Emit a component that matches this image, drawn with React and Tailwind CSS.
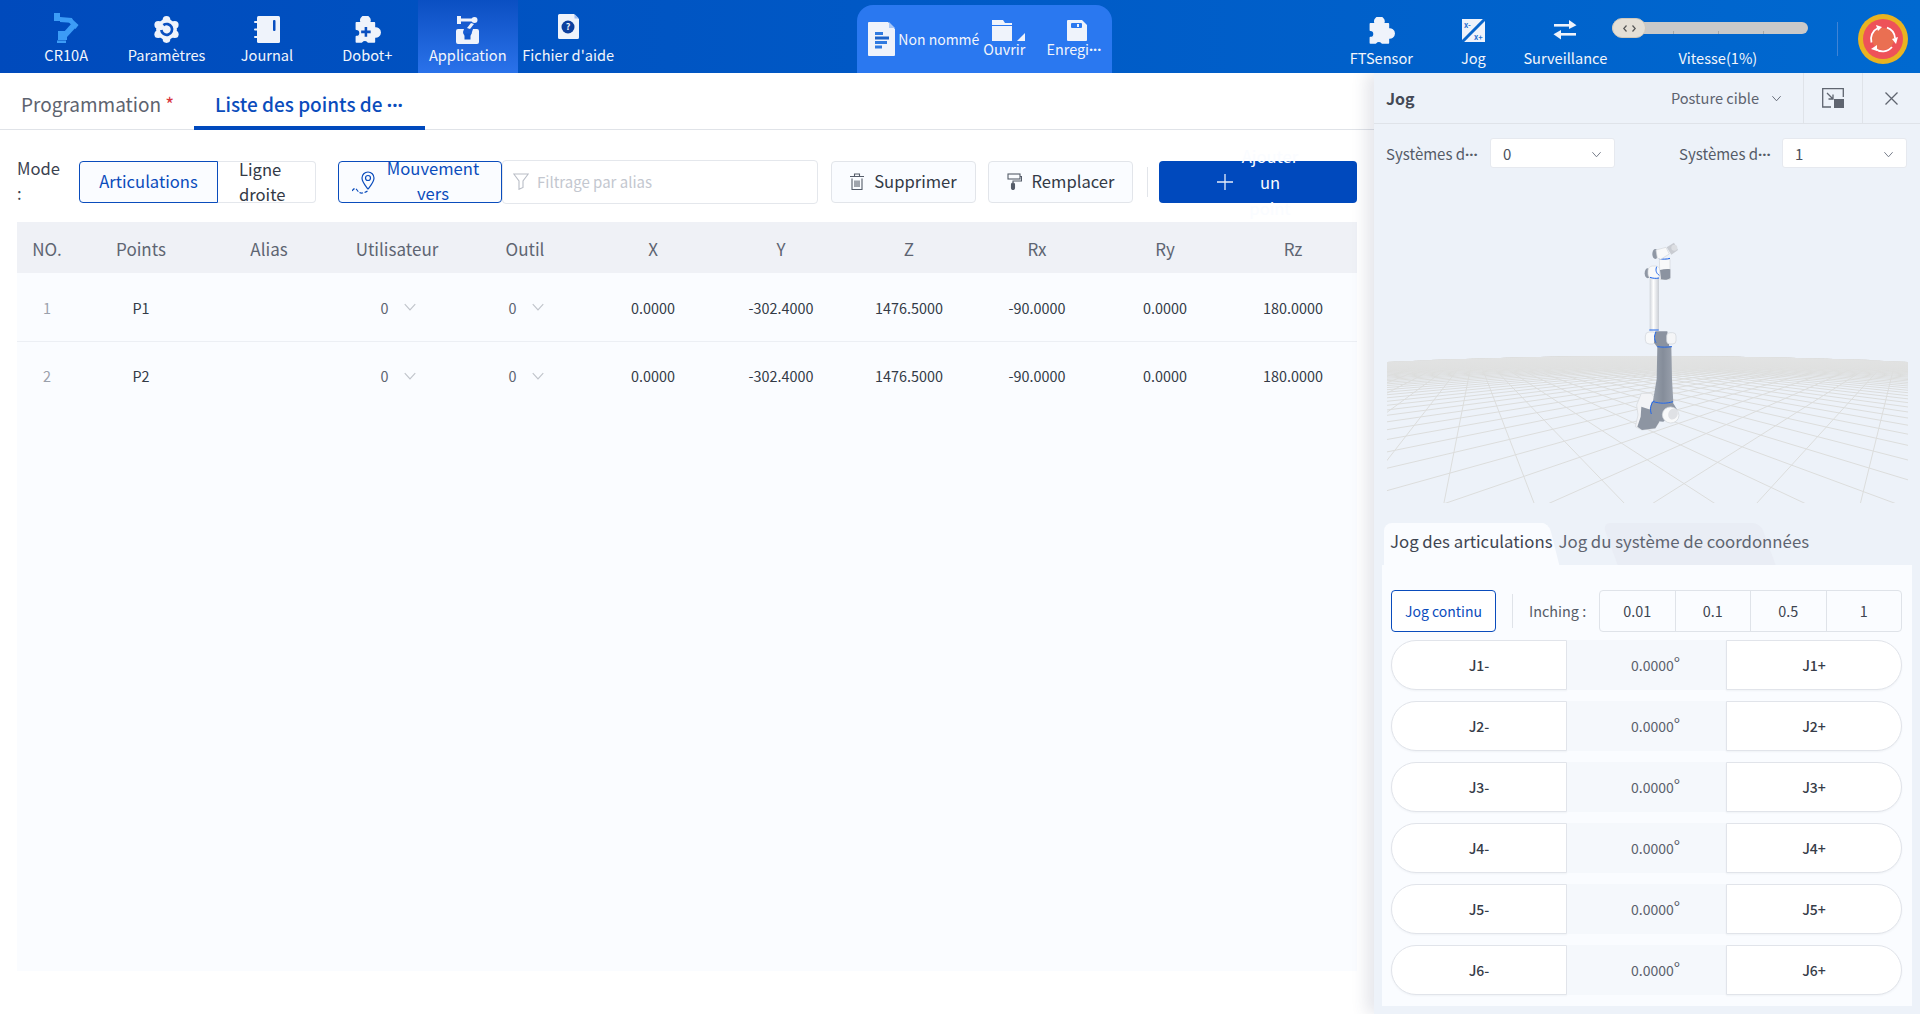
const ICON = '#eff3fb';

const COLUMNS = ['NO.', 'Points', 'Alias', 'Utilisateur', 'Outil', 'X', 'Y', 'Z', 'Rx', 'Ry', 'Rz'];
const ROWS = [
  { no: 1, name: 'P1' },
  { no: 2, name: 'P2' },
];
const JOINTS = ['J1', 'J2', 'J3', 'J4', 'J5', 'J6'];

// the truncation dots sit on the middle line in the reference
function Dots() {
  return <span className="font-['Noto_Sans',sans-serif] font-bold">···</span>;
}

function Chevron({ className }) {
  return (
    <svg viewBox="0 0 12 12" className={className} fill="none" stroke="currentColor" strokeWidth="1">
      <path d="M1.5 3.5 6 8.5l4.5-5" />
    </svg>
  );
}

function ArmIcon() {
  return (
    <svg width="25" height="30" viewBox="0 0 25 30" fill="#3c9cf6">
      <rect x="0" y="0" width="6" height="8" />
      <path d="M6 4l12 1 2 5-14-1z" />
      <path d="M17 5l7.500 7-3 4-7-7z" />
      <path d="M24 12l-11 12-4-4 9-10z" />
      <rect x="4" y="18" width="9" height="9" />
      <rect x="3" y="27.500" width="9" height="2.500" />
    </svg>
  );
}

function GearIcon() {
  const lobes = [0, 60, 120, 180, 240, 300];
  return (
    <svg width="27" height="27" viewBox="0 0 26 26">
      <circle cx="13" cy="13" r="10" fill={ICON} />
      {lobes.map((a) => (
        <circle
          key={a}
          cx={13 + 9.2 * Math.cos(((a + 30) * Math.PI) / 180)}
          cy={13 + 9.2 * Math.sin(((a + 30) * Math.PI) / 180)}
          r="3.7"
          fill={ICON}
        />
      ))}
      <path d="M10 8.800A5.200 5.200 0 1 1 8 13.500" fill="none" stroke="#0a4fc0" strokeWidth="2.600" />
    </svg>
  );
}

function NotebookIcon() {
  return (
    <svg width="26" height="27" viewBox="0 0 26 27" fill={ICON}>
      <rect x="3" y="0" width="23" height="27" rx="1.500" />
      <rect x="0" y="5" width="5" height="2" rx="1" />
      <rect x="0" y="12.500" width="5" height="2" rx="1" />
      <rect x="0" y="20" width="5" height="2" rx="1" />
      <rect x="19" y="4" width="2.500" height="11" rx="1" fill="#0a4fc0" />
    </svg>
  );
}

function PuzzleIcon({ plus }) {
  return (
    <svg width="27" height="27" viewBox="3 0.500 25 25.500">
      <path
        d="M5 7H10A4.200 4.200 0 1 1 17 7H22V12A4.200 4.200 0 1 1 22 20V25H16A3.500 3.500 0 0 0 10 25H5V20A3.500 3.500 0 0 0 5 13Z"
        fill={ICON}
        stroke={ICON}
        strokeWidth="1.500"
        strokeLinejoin="round"
      />
      {plus && <path d="M14 11v9M9.500 15.500h9" stroke="#0a4fc0" strokeWidth="2.400" />}
    </svg>
  );
}

function AppIcon() {
  return (
    <svg width="25" height="28" viewBox="0 0 25 28" fill={ICON}>
      <rect x="2" y="0" width="4" height="8" />
      <rect x="6" y="2.500" width="11" height="3" />
      <circle cx="19.500" cy="4" r="3" />
      <path d="M16 7l3 1-4 5-3-1z" />
      <path d="M1 15a2 2 0 0 1 2-2h6l-1 3H8a4 4 0 0 0 9 0l1-3h4a2 2 0 0 1 2 2v11a2 2 0 0 1-2 2H3a2 2 0 0 1-2-2z" />
      <rect x="9.500" y="17.500" width="6" height="6" fill="#1258cc" />
    </svg>
  );
}

function HelpIcon() {
  return (
    <svg width="21" height="25" viewBox="0 0 21 25">
      <path d="M1.500 0H16l5 5v18.500a1.500 1.500 0 0 1-1.500 1.500h-18A1.500 1.500 0 0 1 0 23.500V1.500A1.500 1.500 0 0 1 1.500 0z" fill={ICON} />
      <path d="M16.500 0 21 4.500h-4.500z" fill="#9fbdf0" />
      <circle cx="10" cy="13" r="6.500" fill="#0d3f9e" />
      <text x="10" y="16" textAnchor="middle" fontSize="9" fontWeight="700" fill={ICON}>?</text>
    </svg>
  );
}

function DocIcon() {
  return (
    <svg width="27" height="34" viewBox="0 0 27 34">
      <path d="M1 0H20l7 7v26a1 1 0 0 1-1 1H1a1 1 0 0 1-1-1V1a1 1 0 0 1 1-1z" fill={ICON} />
      <path d="M21 0l6 6h-6z" fill="#a9c8f8" />
      <rect x="7" y="10" width="8" height="3" fill="#2f7ae0" />
      <rect x="7" y="14.500" width="14" height="3" fill="#1d63c8" />
      <rect x="7" y="19" width="12" height="3" fill="#2f7ae0" />
      <rect x="7" y="23.500" width="7" height="3" fill="#2f7ae0" />
    </svg>
  );
}

function FolderIcon() {
  return (
    <svg width="33" height="21" viewBox="0 0 33 21" fill={ICON}>
      <path d="M0 0h11l2 3h7v2H0z" />
      <rect x="0" y="6" width="20" height="15" />
      <path d="M33 13v8h-8z" />
    </svg>
  );
}

function SaveIcon() {
  return (
    <svg width="20" height="21" viewBox="0 0 20 21">
      <path d="M1 0H15l5 5v15a1 1 0 0 1-1 1H1a1 1 0 0 1-1-1V1a1 1 0 0 1 1-1z" fill={ICON} />
      <rect x="4" y="3" width="11" height="5" rx="1" fill="#2a78f0" />
      <rect x="10" y="4" width="2" height="3" fill={ICON} />
    </svg>
  );
}

function JogIcon() {
  return (
    <svg width="23" height="23" viewBox="0 0 23 23">
      <rect width="23" height="23" fill={ICON} />
      <path d="M23 0 0 23" stroke="#0866cc" strokeWidth="3" />
      <text x="2" y="9" fontSize="7.500" fontWeight="700" fill="#1f6fd0">x-</text>
      <text x="12" y="20.500" fontSize="7.500" fontWeight="700" fill="#1f6fd0">x+</text>
    </svg>
  );
}

function SwapIcon() {
  return (
    <svg width="24" height="20" viewBox="0 0 24 20" fill={ICON}>
      <rect x="1" y="4" width="17" height="2.600" />
      <path d="M16 0l7.500 5.300L16 9z" />
      <rect x="6" y="13" width="17" height="2.600" />
      <path d="M8 10 .5 14.300 8 19.500z" />
    </svg>
  );
}

function EstopIcon() {
  return (
    <svg width="50" height="50" viewBox="0 0 50 50">
      <circle cx="25" cy="25" r="25" fill="#e9b321" />
      <circle cx="25" cy="25" r="20" fill="#ee5259" />
      <circle cx="25" cy="25" r="11" fill="#ea6f52" />
      <g fill="none" stroke="#fff" strokeWidth="1.800">
        <path d="M13.500 28.500A12 12 0 0 1 20 14" />
        <path d="M29 13.700A12 12 0 0 1 37 24" />
        <path d="M34 33A12 12 0 0 1 17 34.500" />
      </g>
      <g fill="#fff">
        <path d="M18 11l6 2-4 4z" />
        <path d="M34 25l6-2-2 7z" />
        <path d="M19 31l0 6-6-2z" />
      </g>
    </svg>
  );
}

function NavItem({ icon, label, active, top }) {
  return (
    <div
      className={`w-[100.4px] flex flex-col items-center relative ${
        active ? 'bg-gradient-to-b from-[#0a4fc2] to-[#2a72ea]' : ''
      }`}
    >
      <div className={`h-[30px] flex items-center justify-center ${top}`}>{icon}</div>
      <span className="absolute top-[45px] text-[14.6px] leading-5 whitespace-nowrap text-[#f2f5fb]">{label}</span>
    </div>
  );
}

function RightItem({ icon, label }) {
  return (
    <div className="w-[92px] flex flex-col items-center pt-[15px]">
      <div className="h-[30px] flex items-center justify-center">{icon}</div>
      <span className="mt-[3px] text-[14.6px] leading-5 whitespace-nowrap text-[#f2f5fb]">{label}</span>
    </div>
  );
}

function TopBar() {
  return (
    <header className="relative z-20 h-[73px] flex bg-gradient-to-r from-[#004abc] to-[#0069d0]">
      <nav className="flex pl-4">
        <NavItem icon={<ArmIcon />} label="CR10A" top="mt-[13px]" />
        <NavItem icon={<GearIcon />} label="Paramètres" top="mt-[14px]" />
        <NavItem icon={<NotebookIcon />} label="Journal" top="mt-[14px]" />
        <NavItem icon={<PuzzleIcon plus />} label="Dobot+" top="mt-[14px]" />
        <NavItem icon={<AppIcon />} label="Application" active top="mt-[15px]" />
        <NavItem icon={<HelpIcon />} label="Fichier d'aide" top="mt-[11px]" />
      </nav>
      <div className="ml-[239px] mt-[5px] w-[255px] rounded-t-2xl bg-[#2a78f0] flex text-[14.4px] text-[#f2f5fb]">
        <div className="flex items-center pl-[11px] h-[68px] w-[123px] shrink-0">
          <DocIcon />
          <span className="ml-[3px] text-[14px] whitespace-nowrap">Non nommé</span>
        </div>
        <div className="w-[50px] -ml-[1px] shrink-0 flex flex-col items-center pt-[15px]">
          <div className="pl-[8px]"><FolderIcon /></div>
          <span className="leading-5 -mt-[2px]">Ouvrir</span>
        </div>
        <div className="flex-1 flex flex-col items-center pt-[15px] pl-[6px]">
          <div className="pl-[6px]"><SaveIcon /></div>
          <span className="leading-5 -mt-[2px] whitespace-nowrap">Enregi<Dots /></span>
        </div>
      </div>
      <div className="ml-[223px] flex">
        <RightItem icon={<PuzzleIcon />} label="FTSensor" />
        <RightItem icon={<JogIcon />} label="Jog" />
        <RightItem icon={<SwapIcon />} label="Surveillance" />
      </div>
      <div className="ml-px w-[196px] pt-[18px]">
        <div className="relative h-[20px]">
          <div className="absolute inset-x-0 top-[4px] h-3 rounded-full bg-[#c9c9c9]" />
          <i className="absolute left-[61px] top-[13px] h-[3px] w-px bg-[#a8a8a8]" />
          <i className="absolute left-[106px] top-[13px] h-[3px] w-px bg-[#a8a8a8]" />
          <i className="absolute left-[151px] top-[13px] h-[3px] w-px bg-[#a8a8a8]" />
          <div className="absolute left-0 top-0 h-[20px] w-[34px] rounded-full bg-[#e4dfd6] border border-[#cfc8bb] flex items-center justify-center gap-[5px]">
            <svg width="4" height="7" viewBox="0 0 4 7" fill="none" stroke="#555" strokeWidth="1.200"><path d="M3.500.500.800 3.500l2.700 3" /></svg>
            <svg width="4" height="7" viewBox="0 0 4 7" fill="none" stroke="#555" strokeWidth="1.200"><path d="M.500.500l2.700 3-2.700 3" /></svg>
          </div>
        </div>
        <div className="mt-[10px] pl-[15px] text-center text-[14.6px] leading-5 text-[#f2f5fb]">Vitesse(1%)</div>
      </div>
      <div className="ml-[29px] mt-[22px] h-[34px] w-px bg-[#3f84d6]" />
      <div className="ml-5 mt-[14px]">
        <EstopIcon />
      </div>
    </header>
  );
}

function Toolbar() {
  return (
    <div className="h-[92px] pl-[17px] pt-[31px] flex items-start text-[16.6px] leading-[25px]">
      <div className="w-[47px] text-[#3b4250] -mt-[5px]">Mode :</div>
      <div className="ml-[15px] w-[139px] h-[42px] pb-px rounded-l border border-[#0a4cbc] bg-[#fafcff] text-[#0a4cbc] flex items-center justify-center">
        Articulations
      </div>
      <div className="w-[98px] h-[42px] rounded-r border border-l-0 border-[#e4e7ec] pl-[21px] text-[#333a46]">
        <div className="-mt-[5px]">Ligne droite</div>
      </div>
      <button className="ml-[22px] w-[164px] h-[42px] rounded border border-[#0a4cbc] bg-[#fafcff] text-[#0a4cbc] flex items-center pl-[13px]">
        <svg width="23" height="24" viewBox="0 0 23 24" fill="none" stroke="#0a4cbc" strokeWidth="1.200" className="shrink-0">
          <path d="M16 19c-3-4-6-7-6-11a6 6 0 0 1 12 0c0 4-3 7-6 11z" />
          <circle cx="16" cy="8" r="2.500" />
          <path d="M0 21c2-3 3.500-3 5-1s3 3.500 5.500 3 3.500-1 5-2" strokeDasharray="3.500 1.500" />
        </svg>
        <span className="w-[116px] text-center -mt-[2px]">Mouvement vers</span>
      </button>
      <div className="-mt-px w-[316px] h-[44px] pb-px rounded border border-[#e4e7ec] bg-white flex items-center pl-[10px] text-[15px] text-[#c3c7cf]">
        <svg width="16" height="17" viewBox="0 0 16 17" fill="none" stroke="#b9bdc6" strokeWidth="1.100">
          <path d="M.800 1h14.400L10 8v6.500l-4 1.800V8z" />
        </svg>
        <span className="ml-[8px]">Filtrage par alias</span>
      </div>
      <button className="ml-[13px] w-[145px] h-[42px] pb-px rounded border border-[#e2e5ea] bg-[#fafcff] text-[#333a46] flex items-center justify-center gap-[10px]">
        <svg width="14" height="17" viewBox="0 0 14 17" fill="none" stroke="#555c69" strokeWidth="1.100">
          <path d="M0 3.500h14M4.500 3.500V1h5v2.500M2 5.500v11h10v-11M5 7.500v6.500M7 7.500v6.500M9 7.500v6.500" />
        </svg>
        Supprimer
      </button>
      <button className="ml-[12px] w-[145px] h-[42px] pb-px rounded border border-[#e2e5ea] bg-[#fafcff] text-[#333a46] flex items-center justify-center gap-[10px]">
        <svg width="15" height="17" viewBox="0 0 15 17" fill="none" stroke="#555c69" strokeWidth="1.100">
          <rect x="1" y="1" width="12" height="5" />
          <path d="M13 3.500h1.500v4.500H6v2" />
          <rect x="4.500" y="10" width="3" height="6.500" rx="1.500" fill="#555c69" />
        </svg>
        Remplacer
      </button>
      <div className="ml-[14px] mt-[6px] w-px h-[30px] bg-[#e2e5ea]" />
      <button className="ml-[11px] w-[198px] h-[42px] rounded bg-[#0049bd] text-[#fafcff] flex items-center pl-[58px] leading-[26px]">
        <svg width="16" height="16" viewBox="0 0 16 16" stroke="#e6edfa" strokeWidth="1.300" className="shrink-0">
          <path d="M8 0v16M0 8h16" />
        </svg>
        <span className="ml-[4px] w-[66px] text-center">
          Ajouter
          <br />
          un
          <br />
          point
        </span>
      </button>
    </div>
  );
}

function PointsTable() {
  const values = ['0.0000', '-302.4000', '1476.5000', '-90.0000', '0.0000', '180.0000'];
  return (
    <div className="ml-[17px] mr-[17px] h-[749px] bg-[#fafcff]">
      <div className="grid grid-cols-[60px_repeat(10,1fr)] h-[51px] pt-[2px] items-center bg-[#eff1f6] text-[17px] text-[#5e6572] text-center">
        {COLUMNS.map((c) => (
          <div key={c}>{c}</div>
        ))}
      </div>
      {ROWS.map((r, i) => (
        <div
          key={r.no}
          className={`grid grid-cols-[60px_repeat(10,1fr)] items-center text-center text-[14.4px] text-[#333a46] ${
            i === 0 ? 'h-[69px] pt-px border-b border-[#eceff4]' : 'h-[68px]'
          }`}
        >
          <div className="text-[#9aa0ab]">{r.no}</div>
          <div>{r.name}</div>
          <div />
          {[0, 1].map((k) => (
            <div key={k} className="flex items-center justify-center gap-[14px] pl-[3px] text-[#5c6470]">
              0
              <Chevron className="w-[14px] h-[14px] text-[#c0c4cb]" />
            </div>
          ))}
          {values.map((v, n) => (
            <div key={n}>{v}</div>
          ))}
        </div>
      ))}
    </div>
  );
}

function Floor() {
  const cx = 270;
  const y0 = -8;
  const f = 210;
  const fh = 479;
  const rot = (41 * Math.PI) / 180;
  const project = (x, z) => [cx + (f * x) / z, y0 + fh / z];
  const world = (a, b) => [a * Math.cos(rot) - b * Math.sin(rot), 25 + a * Math.sin(rot) + b * Math.cos(rot)];
  const lines = [];
  const segment = (p, q) => {
    let [x1, z1] = p;
    let [x2, z2] = q;
    if (z1 < 1 && z2 < 1) return;
    if (z1 < 1) {
      const t = (1 - z1) / (z2 - z1);
      x1 += (x2 - x1) * t;
      z1 = 1;
    }
    if (z2 < 1) {
      const t = (1 - z2) / (z1 - z2);
      x2 += (x1 - x2) * t;
      z2 = 1;
    }
    const [a, b] = project(x1, z1);
    const [c, d] = project(x2, z2);
    lines.push(`M${a.toFixed(1)} ${b.toFixed(1)}L${c.toFixed(1)} ${d.toFixed(1)}`);
  };
  for (let i = -60; i <= 60; i += 1) {
    segment(world(i + 0.26, -70), world(i + 0.26, 70));
    segment(world(-70, i + 0.5), world(70, i + 0.5));
  }
  return (
    <svg width="521" height="147" viewBox="0 0 521 147" className="block">
      <defs>
        <clipPath id="floor-clip">
          <path d="M0 6Q260 -6 521 6V147H0Z" />
        </clipPath>
        <linearGradient id="floor-haze" x1="0" y1="0" x2="0" y2="1">
          <stop offset="0" stopColor="#e2e3e3" />
          <stop offset="0.5" stopColor="#e2e3e3" stopOpacity="0.7" />
          <stop offset="1" stopColor="#e2e3e3" stopOpacity="0" />
        </linearGradient>
      </defs>
      <g clipPath="url(#floor-clip)">
        <path d={lines.join('')} fill="none" stroke="#dcdddc" strokeWidth="1" />
        <rect width="521" height="20" fill="url(#floor-haze)" />
      </g>
    </svg>
  );
}

function Robot() {
  return (
    <svg width="110" height="230" viewBox="0 0 330 690">
      <defs>
        <linearGradient id="robot-white" x1="0" y1="0" x2="1" y2="0">
          <stop offset="0" stopColor="#cfd3d9" />
          <stop offset="0.4" stopColor="#ffffff" />
          <stop offset="1" stopColor="#c9cdd4" />
        </linearGradient>
        <linearGradient id="robot-grey" x1="0" y1="0" x2="1" y2="0">
          <stop offset="0" stopColor="#98a0ac" />
          <stop offset="0.5" stopColor="#858d9a" />
          <stop offset="1" stopColor="#9aa1ad" />
        </linearGradient>
      </defs>
      {/* base */}
      <path d="M124 520l30 0 14 20-6 40 16 25-12 20-40 5-20-10 8-35-4-30z" fill="#f2f3f6" stroke="#d3d6db" strokeWidth="2" />
      <path d="M124 560l30 10 24 35-12 20-40 5-14-10 10-30z" fill="#8d95a2" />
      {/* lower arm */}
      <path d="M172 378h42l2 100 4 70h-62l12-70z" fill="url(#robot-grey)" />
      <path d="M155 545h62l15 25-42 35-32-3-10-30z" fill="#8f97a4" />
      <ellipse cx="212" cy="585" rx="25" ry="24" fill="#f8f9fa" stroke="#d3d6db" strokeWidth="2" transform="rotate(25 212 585)" />
      <ellipse cx="219" cy="582" rx="14" ry="17" fill="#dfe1e5" transform="rotate(25 219 582)" />
      <path d="M160 545c20 6 40 6 59 0M162 542c-10 10-13 25-8 40" fill="none" stroke="#1f66ec" strokeWidth="3" />
      {/* upper arm */}
      <rect x="149" y="170" width="28" height="162" fill="url(#robot-white)" />
      {/* elbow */}
      <rect x="136" y="336" width="34" height="36" rx="12" fill="#f8f9fa" stroke="#cfd3d9" strokeWidth="2" />
      <path d="M166 334h36l6 48h-36l-10-14z" fill="#8a92a0" />
      <rect x="200" y="338" width="28" height="34" rx="10" fill="#f4f5f7" stroke="#cfd3d9" strokeWidth="2" />
      <path d="M148 330h28M172 380c14 2 30 2 44 0M168 336c-6 10-6 22 0 32" fill="none" stroke="#1f66ec" strokeWidth="3" />
      {/* wrist */}
      <ellipse cx="143" cy="160" rx="9" ry="15" fill="#8f97a4" />
      <rect x="144" y="138" width="36" height="38" rx="14" fill="#f8f9fa" stroke="#d3d6db" strokeWidth="2" />
      <path d="M178 118h32v60h-30z" fill="#f8f9fa" stroke="#d3d6db" strokeWidth="2" />
      <path d="M180 150c10-2 20-4 31-2v26c-6 6-18 6-28 4z" fill="#8b93a0" />
      <path d="M150 172c8 3 18 4 27 2M178 116c10 2 22 2 32-1M170 140c-4 10-2 20 8 26" fill="none" stroke="#1f66ec" strokeWidth="3" />
      {/* flange */}
      <ellipse cx="166" cy="102" rx="9" ry="15" fill="#8f97a4" />
      <path d="M168 90l30-8 10 20-26 16-10-4z" fill="#f8f9fa" stroke="#d3d6db" strokeWidth="2" />
      <path d="M200 82l22-14 12 22-20 14z" fill="#c9ccd2" />
      <circle cx="223" cy="83" r="9" fill="#dcdee2" />
    </svg>
  );
}

function JogRow({ joint }) {
  return (
    <div className="flex h-[50px] text-[14px]">
      <button className="w-[176px] rounded-l-full border border-[#e1e4ea] bg-white font-medium text-[#363c48] shadow-[0_1px_2px_rgba(40,50,70,0.05)]">
        {joint}-
      </button>
      <div className="w-[159px] pl-[18px] bg-[#f5f8fc] flex items-center justify-center text-[#5b616d]">
        0.0000
        <span className="text-[17px] leading-none -mt-[5px]">°</span>
      </div>
      <button className="w-[176px] rounded-r-full border border-[#e1e4ea] bg-white font-medium text-[#363c48] shadow-[0_1px_2px_rgba(40,50,70,0.05)]">
        {joint}+
      </button>
    </div>
  );
}

function SelectBox({ value }) {
  return (
    <div className="w-[125px] h-[30px] pt-[2px] rounded-[3px] bg-white border border-[#e6e9ef] flex items-center justify-between pl-[12px] pr-[12px] text-[15px] text-[#4a505c]">
      {value}
      <Chevron className="w-[11px] h-[11px] text-[#6b7280]" />
    </div>
  );
}

function JogPanel() {
  return (
    <aside className="relative z-10 flex-1 bg-[#edf2f9] shadow-[-8px_0_14px_rgba(60,70,110,0.13)] flex flex-col">
      <div className="h-[51px] flex items-stretch border-b border-[#dfe3e9] shrink-0">
        <div className="pl-3 flex items-center text-[16px] font-bold text-[#444a56]">Jog</div>
        <div className="ml-auto flex items-center text-[14.6px] text-[#5d636f] pr-[21px]">
          Posture cible
          <Chevron className="ml-[12px] w-[11px] h-[11px]" />
        </div>
        <div className="w-[59px] border-l border-[#dfe3e9] flex items-center justify-center">
          <svg width="22" height="20" viewBox="0 0 22 20" fill="none" stroke="#5f6570" strokeWidth="1.300">
            <path d="M9 19H.700V.700h20.600V9" />
            <path d="M5 5l6 6M11 6.500V11H6.500" />
            <rect x="12" y="11" width="10" height="9" fill="#5f6570" stroke="none" />
          </svg>
        </div>
        <div className="w-[58px] border-l border-[#dfe3e9] flex items-center justify-center">
          <svg width="13" height="13" viewBox="0 0 13 13" stroke="#5f6570" strokeWidth="1.300">
            <path d="M.500.500l12 12M12.500.500l-12 12" />
          </svg>
        </div>
      </div>

      <div className="flex items-center pl-3 mt-[14px] text-[15px] text-[#555b67] shrink-0">
        <span className="w-[104px] pt-[2px] whitespace-nowrap">Systèmes d<Dots /></span>
        <SelectBox value="0" />
        <span className="ml-[64px] w-[103px] pt-[2px] whitespace-nowrap">Systèmes d<Dots /></span>
        <SelectBox value="1" />
      </div>

      <div className="relative h-[355px] shrink-0 pl-[13px] pt-[188px]">
        <Floor />
        <div className="absolute left-[226px] top-[52px]">
          <Robot />
        </div>
      </div>

      <div className="relative h-[42px] ml-2 shrink-0">
        <div className="absolute left-[228px] top-0 w-[158px] h-[42px] bg-[#e9edf5] rounded-t-lg skew-x-[20deg]" />
        <div className="absolute left-[2px] top-0 w-[165px] h-[42px] bg-[#fafcff] rounded-tl-lg rounded-tr-lg" />
        <div className="absolute left-[158px] top-0 w-[14px] h-[42px] bg-[#fafcff] rounded-tr-lg skew-x-[14deg]" />
        <div className="relative h-full flex items-center pb-[4px] text-[16.8px]">
          <span className="ml-[8px] text-[#3f4551]">Jog des articulations</span>
          <span className="ml-[6px] text-[#5f6571]">Jog du système de coordonnées</span>
        </div>
      </div>

      <div className="ml-2 w-[530px] h-[441px] bg-[#fafcff] pl-[9px] pt-[25px] shrink-0">
        <div className="flex h-[42px] items-center text-[14.4px]">
          <button className="w-[105px] h-[42px] rounded border border-[#0a4cbc] text-[14px] text-[#0a4cbc] bg-white">Jog continu</button>
          <div className="ml-[16px] h-[34px] w-px bg-[#dfe3e9]" />
          <span className="ml-[16px] w-[70px] text-[#555b67] whitespace-nowrap">Inching :</span>
          <div className="flex w-[303px] h-[42px] rounded border border-[#dfe3e9] text-[#3d4450] divide-x divide-[#dfe3e9]">
            {['0.01', '0.1', '0.5', '1'].map((v) => (
              <div key={v} className="flex-1 flex items-center justify-center">{v}</div>
            ))}
          </div>
        </div>
        <div className="mt-2 flex flex-col gap-[11px]">
          {JOINTS.map((j) => (
            <JogRow key={j} joint={j} />
          ))}
        </div>
      </div>
    </aside>
  );
}

export default function App() {
  return (
    <div className="w-[1920px] h-[1014px] overflow-hidden flex flex-col bg-white font-['Noto_Sans_CJK_SC','Noto_Sans',sans-serif]">
      <TopBar />
      <div className="flex flex-1 min-h-0">
        <main className="w-[1374px] shrink-0">
          <div className="h-[57px] border-b border-[#e0e3e8] flex text-[19px]">
            <div className="w-[194px] pl-[21px] pt-[17px] text-[#5d636f] whitespace-nowrap">
              Programmation <span className="text-[#d9363e]">*</span>
            </div>
            <div className="w-[231px] h-[57px] border-b-4 border-[#0049bd] pl-[21px] pt-[17px] text-[#0a4cbc] font-medium whitespace-nowrap">
              Liste des points de <Dots />
            </div>
          </div>
          <Toolbar />
          <PointsTable />
        </main>
        <JogPanel />
      </div>
    </div>
  );
}
